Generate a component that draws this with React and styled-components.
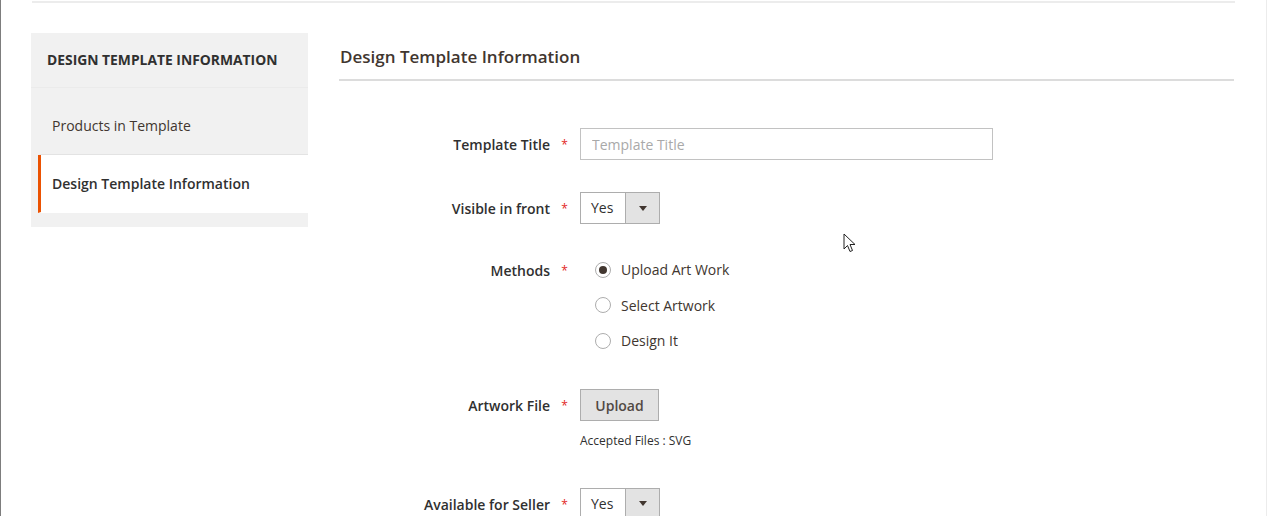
import React from "react";
import styled, { createGlobalStyle } from "styled-components";

const Global = createGlobalStyle`
  html, body { margin: 0; padding: 0; background: #ffffff; }
  body { font-family: "Open Sans", "Noto Sans", Arial, sans-serif; color: #303030; }
  * { box-sizing: border-box; }
`;

const Page = styled.div`
  position: relative;
  width: 1267px;
  height: 516px;
  overflow: hidden;
  border-left: 1px solid #7d7d7d;
  border-right: 1px solid #ececec;
  background: #fff;
`;

const TopRule = styled.div`
  margin: 1px 31px 0 31px;
  height: 2px;
  background: #ececec;
`;

const Main = styled.div`
  display: flex;
  align-items: flex-start;
  gap: 31px;
  padding: 30px 0 0 30px;
`;

const Sidebar = styled.nav`
  width: 277px;
  flex: none;
  background: #f1f1f1;
  padding-bottom: 14px;
`;

const SideTitle = styled.div`
  height: 55px;
  padding: 17px 16px 0;
  font-size: 13.85px;
  line-height: 20px;
  font-weight: 700;
  text-transform: uppercase;
  color: #303030;
  border-bottom: 1px solid #ebebeb;
`;

const SideList = styled.ul`
  list-style: none;
  margin: 0;
  padding: 9px 0 0 0;
`;

const SideItem = styled.li`
  margin-left: 7px;
  height: 58px;
  display: flex;
  align-items: center;
  padding-left: 11px;
  font-size: 14px;
  color: ${(p) => (p.$active ? "#303030" : "#41362f")};
  font-weight: ${(p) => (p.$active ? 600 : 400)};
  background: ${(p) => (p.$active ? "#ffffff" : "transparent")};
  border-left: 3px solid ${(p) => (p.$active ? "#eb5202" : "transparent")};
  border-bottom: 1px solid ${(p) => (p.$active ? "transparent" : "#e3e3e3")};
`;

const Content = styled.section`
  width: 895px;
  flex: none;
`;

const Heading = styled.h2`
  margin: 0;
  padding: 13px 0 11px 1px;
  font-size: 17px;
  line-height: 22px;
  font-weight: 600;
  color: #41362f;
  border-bottom: 2px solid #dcdcdc;
`;

const Form = styled.div`
  display: flex;
  flex-direction: column;
  padding-top: 47px;
`;

const Row = styled.div`
  display: grid;
  grid-template-columns: 211px 29px 1fr;
  align-items: start;
  margin-top: ${(p) => p.$mt || 0}px;
`;

const Label = styled.label`
  text-align: right;
  font-size: 14px;
  font-weight: 600;
  color: #303030;
  height: ${(p) => p.$lh || 32}px;
  padding-top: 1px;
  line-height: ${(p) => p.$lh || 32}px;
`;

const Req = styled.span`
  text-align: center;
  color: #e22626;
  font-size: 12px;
  height: ${(p) => p.$lh || 32}px;
  padding-top: 1px;
  line-height: ${(p) => p.$lh || 32}px;
`;

const Control = styled.div`
  display: flex;
  flex-direction: column;
  align-items: flex-start;
  padding-left: 1px;
`;

const TextInput = styled.input`
  width: 413px;
  height: 32px;
  border: 1px solid #c2c2c2;
  padding: 0 11px;
  font-family: inherit;
  font-size: 14px;
  color: #303030;
  outline: none;
  &::placeholder { color: #a9a9a9; }
`;

const Select = styled.div`
  display: flex;
  width: 80px;
  height: 32px;
  border: 1px solid #adadad;
  background: #fff;
`;

const SelectValue = styled.div`
  flex: 1;
  padding-left: 10px;
  font-size: 14px;
  line-height: 30px;
  color: #303030;
`;

const SelectArrow = styled.div`
  width: 34px;
  background: #e3e3e3;
  border-left: 1px solid #adadad;
  display: flex;
  align-items: center;
  justify-content: center;
  &::after {
    content: "";
    border-left: 4px solid transparent;
    border-right: 4px solid transparent;
    border-top: 5px solid #41362f;
  }
`;

const RadioList = styled.div`
  display: flex;
  flex-direction: column;
  padding-left: 16px;
`;

const RadioOption = styled.div`
  height: 35.5px;
  display: flex;
  align-items: center;
  gap: 10px;
  font-size: 14px;
  color: #41362f;
`;

const RadioDot = styled.span`
  width: 16px;
  height: 16px;
  border-radius: 50%;
  border: 1px solid #adadad;
  background: #fff;
  display: flex;
  align-items: center;
  justify-content: center;
  &::after {
    content: "";
    width: 8px;
    height: 8px;
    border-radius: 50%;
    background: ${(p) => (p.$checked ? "#41362f" : "transparent")};
  }
`;

const Button = styled.button`
  width: 79px;
  height: 32px;
  background: #e3e3e3;
  border: 1px solid #adadad;
  font-family: inherit;
  font-size: 14px;
  font-weight: 600;
  color: #514943;
  padding: 1px 0 0;
`;

const Note = styled.div`
  margin-top: 11px;
  font-size: 12px;
  line-height: 18px;
  color: #303030;
`;

const Cursor = styled.svg`
  position: absolute;
  left: 842px;
  top: 233px;
`;

function SelectBox({ value }) {
  return (
    <Select>
      <SelectValue>{value}</SelectValue>
      <SelectArrow />
    </Select>
  );
}

export default function App() {
  const methods = [
    { label: "Upload Art Work", checked: true },
    { label: "Select Artwork", checked: false },
    { label: "Design It", checked: false },
  ];
  return (
    <>
      <Global />
      <Page>
        <TopRule />
        <Main>
          <Sidebar>
            <SideTitle>Design Template Information</SideTitle>
            <SideList>
              <SideItem>Products in Template</SideItem>
              <SideItem $active>Design Template Information</SideItem>
            </SideList>
          </Sidebar>
          <Content>
            <Heading>Design Template Information</Heading>
            <Form>
              <Row>
                <Label>Template Title</Label>
                <Req>*</Req>
                <Control>
                  <TextInput placeholder="Template Title" />
                </Control>
              </Row>
              <Row $mt={32}>
                <Label>Visible in front</Label>
                <Req>*</Req>
                <Control>
                  <SelectBox value="Yes" />
                </Control>
              </Row>
              <Row $mt={28}>
                <Label $lh={35.5}>Methods</Label>
                <Req $lh={35.5}>*</Req>
                <RadioList>
                  {methods.map((m) => (
                    <RadioOption key={m.label}>
                      <RadioDot $checked={m.checked} />
                      {m.label}
                    </RadioOption>
                  ))}
                </RadioList>
              </Row>
              <Row $mt={30}>
                <Label>Artwork File</Label>
                <Req>*</Req>
                <Control>
                  <Button>Upload</Button>
                  <Note>Accepted Files : SVG</Note>
                </Control>
              </Row>
              <Row $mt={38}>
                <Label>Available for Seller</Label>
                <Req>*</Req>
                <Control>
                  <SelectBox value="Yes" />
                </Control>
              </Row>
            </Form>
          </Content>
        </Main>
        <Cursor width="14" height="22" viewBox="0 0 14 22">
          <path d="M1 1 L1 16 L4.5 12.5 L7 18.5 L9.5 17.5 L7 11.5 L12 11.5 Z" fill="#fff" stroke="#222" strokeWidth="1" strokeLinejoin="round" />
        </Cursor>
      </Page>
    </>
  );
}
